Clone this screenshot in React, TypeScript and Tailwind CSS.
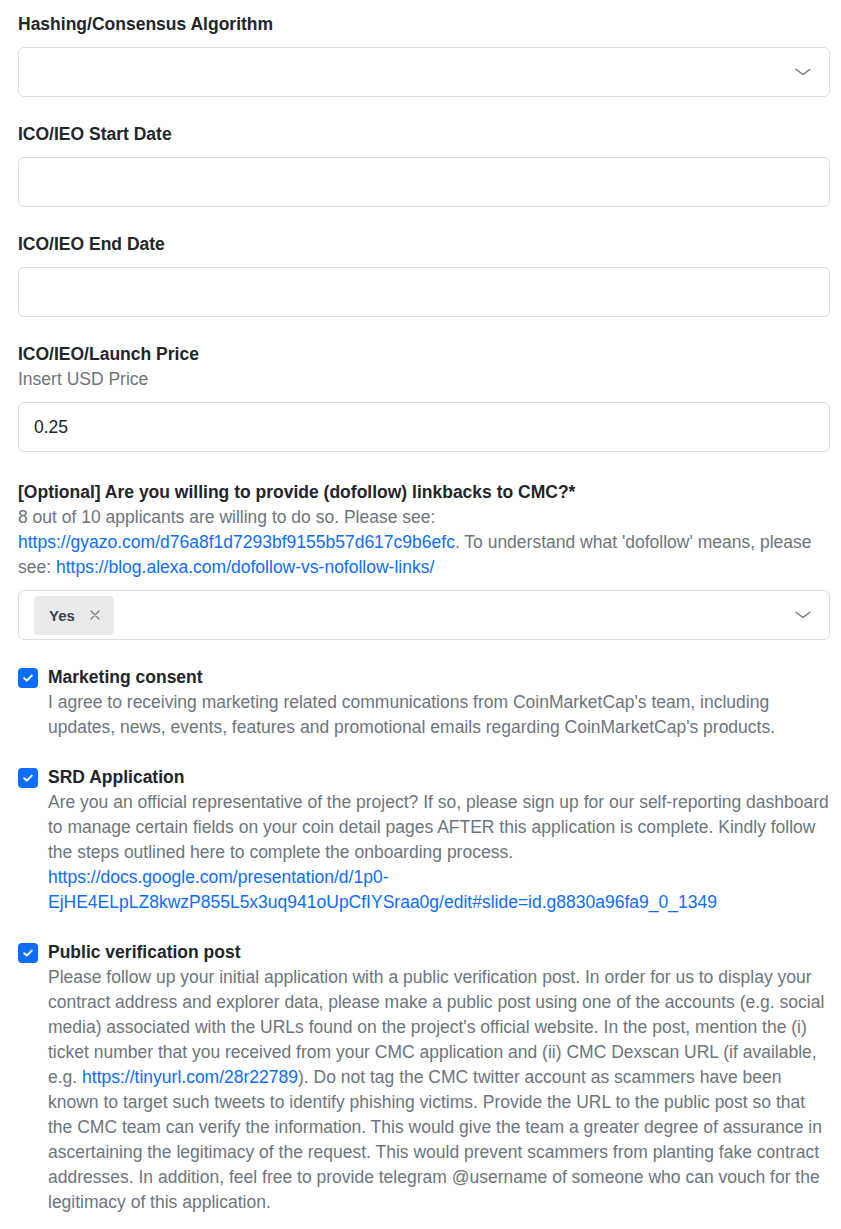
import React from "react";

const Chevron = () => (
  <svg width="16" height="8" viewBox="0 0 16 8" fill="none" className="shrink-0">
    <path d="M1 1.2 L8 6.5 L15 1.2" stroke="#6b7280" strokeWidth="1.3" strokeLinecap="round" strokeLinejoin="round" />
  </svg>
);

const Check = () => (
  <div className="w-5 h-5 rounded-[4px] bg-[#0d6efd] flex items-center justify-center shrink-0 mt-[3px]">
    <svg width="12" height="10" viewBox="0 0 12 10" fill="none">
      <path d="M2.2 5.2 L4.8 7.6 L9.8 2.6" stroke="white" strokeWidth="2" strokeLinecap="round" strokeLinejoin="round" />
    </svg>
  </div>
);

const Label = ({ children, className = "" }: { children: React.ReactNode; className?: string }) => (
  <div className={"font-bold text-[17.5px] leading-[25px] text-[#222529] " + className}>{children}</div>
);

const Input = ({ value, select }: { value?: string; select?: boolean }) => (
  <div className="h-[50px] w-full border border-[#dcdcdc] rounded-[6px] bg-white flex items-center px-[15px]">
    <span className="flex-1 text-[17.5px] text-[#222529]">{value}</span>
    {select && <div className="mr-[3px]"><Chevron /></div>}
  </div>
);

const A = ({ children }: { children: React.ReactNode }) => (
  <a className="text-[#0d6efd]">{children}</a>
);

export default function App() {
  return (
    <div
      className="w-[841px] bg-white pl-[18px] pr-[11px] pt-[12px] pb-[20px] text-[17.5px] leading-[25px]"
      style={{ fontFamily: '"Liberation Sans", Arial, sans-serif' }}
    >
      <Label className="mb-[10px]">Hashing/Consensus Algorithm</Label>
      <Input select />

      <Label className="mt-[25px] mb-[10px]">ICO/IEO Start Date</Label>
      <Input />

      <Label className="mt-[25px] mb-[10px]">ICO/IEO End Date</Label>
      <Input />

      <Label className="mt-[25px]">ICO/IEO/Launch Price</Label>
      <div className="text-[#6c757d] mb-[10px]">Insert USD Price</div>
      <Input value="0.25" />

      <Label className="mt-[28px]">[Optional] Are you willing to provide (dofollow) linkbacks to CMC?*</Label>
      <div className="text-[#6c757d] mb-[10px]">
        8 out of 10 applicants are willing to do so. Please see:{" "}
        <A>https://gyazo.com/d76a8f1d7293bf9155b57d617c9b6efc</A>. To understand what 'dofollow' means, please see:{" "}
        <A>https://blog.alexa.com/dofollow-vs-nofollow-links/</A>
      </div>
      <div className="h-[50px] w-full border border-[#dcdcdc] rounded-[6px] bg-white flex items-center pl-[15px] pr-[15px]">
        <div className="flex-1 flex">
          <div className="h-[39px] w-[80px] rounded-[4px] bg-[#e9eaec] flex items-center pl-[15px] gap-[15px]">
            <span className="font-bold text-[15px] text-[#3f4246]">Yes</span>
            <svg width="10" height="10" viewBox="0 0 10 10" fill="none">
              <path d="M1 1 L9 9 M9 1 L1 9" stroke="#7b8088" strokeWidth="1.3" strokeLinecap="round" />
            </svg>
          </div>
        </div>
        <div className="mr-[3px]"><Chevron /></div>
      </div>

      <div className="flex gap-[10px] mt-[25px]">
        <Check />
        <div className="flex-1">
          <Label>Marketing consent</Label>
          <div className="text-[#6c757d]">
            I agree to receiving marketing related communications from CoinMarketCap's team, including updates, news, events, features and promotional emails regarding CoinMarketCap's products.
          </div>
        </div>
      </div>

      <div className="flex gap-[10px] mt-[25px]">
        <Check />
        <div className="flex-1">
          <Label>SRD Application</Label>
          <div className="text-[#6c757d]">
            Are you an official representative of the project? If so, please sign up for our self-reporting dashboard to manage certain fields on your coin detail pages AFTER this application is complete. Kindly follow the steps outlined here to complete the onboarding process.{" "}
            <A>https://docs.google.com/presentation/d/1p0-EjHE4ELpLZ8kwzP855L5x3uq941oUpCfIYSraa0g/edit#slide=id.g8830a96fa9_0_1349</A>
          </div>
        </div>
      </div>

      <div className="flex gap-[10px] mt-[25px]">
        <Check />
        <div className="flex-1">
          <Label>Public verification post</Label>
          <div className="text-[#6c757d]">
            Please follow up your initial application with a public verification post. In order for us to display your contract address and explorer data, please make a public post using one of the accounts (e.g. social media) associated with the URLs found on the project's official website. In the post, mention the (i) ticket number that you received from your CMC application and (ii) CMC Dexscan URL (if available, e.g. <A>https://tinyurl.com/28r22789</A>). Do not tag the CMC twitter account as scammers have been known to target such tweets to identify phishing victims. Provide the URL to the public post so that the CMC team can verify the information. This would give the team a greater degree of assurance in ascertaining the legitimacy of the request. This would prevent scammers from planting fake contract addresses. In addition, feel free to provide telegram @username of someone who can vouch for the legitimacy of this application.
          </div>
        </div>
      </div>
    </div>
  );
}
